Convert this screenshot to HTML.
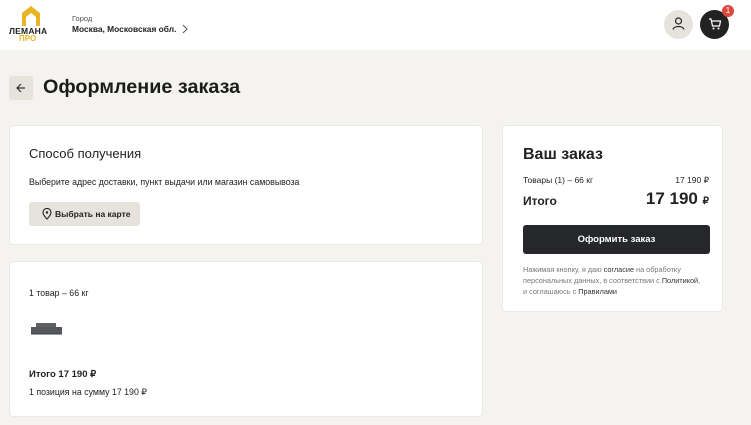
<!DOCTYPE html>
<html><head><meta charset="utf-8"><style>
*{box-sizing:border-box;margin:0;padding:0}
body{width:751px;height:425px;overflow:hidden;background:#f4f3f0;font-family:"Liberation Sans",sans-serif;color:#222;position:relative}
.hdr{position:absolute;left:0;top:0;width:751px;height:50px;background:#fff}
.card{position:absolute;background:#fff;border:1px solid #ebe9e4;border-radius:4px}
.a{position:absolute;white-space:nowrap}
</style></head><body>
<div class="hdr">
 <svg class="a" style="left:22px;top:6px" width="18" height="20" viewBox="0 0 18 20"><path d="M9 0L18 7V20H0V7Z" fill="#e8b624"/><path d="M9 7L14 11V20H4V11Z" fill="#fff"/></svg>
 <div class="a" style="left:9px;top:26px;font-size:8.5px;font-weight:bold;letter-spacing:.2px">ЛЕМАНА</div>
 <div class="a" style="left:19px;top:34px;font-size:8px;font-weight:bold;color:#e8b624">ПРО</div>
 <div class="a" style="left:72px;top:14px;font-size:7.5px;color:#555">Город</div>
 <div class="a" style="left:72px;top:24px;font-size:8.4px;font-weight:bold">Москва, Московская обл.</div>
 <svg class="a" style="left:182px;top:24px" width="6" height="10"><path d="M1 1L5 5L1 9" stroke="#555" fill="none"/></svg>
 <div class="a" style="left:664px;top:10px;width:29px;height:29px;border-radius:50%;background:#e6e3dc"></div>
 <svg class="a" style="left:672px;top:17px" width="13" height="13" viewBox="0 0 13 13"><circle cx="6.5" cy="4" r="3" stroke="#222" fill="none" stroke-width="1.2"/><path d="M1 12.5C2 8.5 11 8.5 12 12.5" stroke="#222" fill="none" stroke-width="1.2"/></svg>
 <div class="a" style="left:700px;top:10px;width:29px;height:29px;border-radius:50%;background:#222"></div>
 <svg class="a" style="left:708px;top:18px" width="14" height="12" viewBox="0 0 14 12"><path d="M1 1H3L4.5 8H11.5L12.5 3H4" stroke="#fff" fill="none" stroke-width="1.2"/><circle cx="5.5" cy="10.5" r="1" fill="#fff"/><circle cx="10.5" cy="10.5" r="1" fill="#fff"/></svg>
 <div class="a" style="left:722px;top:5px;width:12px;height:12px;border-radius:50%;background:#d9483b;color:#fff;font-size:8px;text-align:center;line-height:12px">1</div>
</div>
<div class="a" style="left:9px;top:76px;width:24px;height:24px;border-radius:3px;background:#e6e3dc"></div>
<svg class="a" style="left:16px;top:83px" width="10" height="10"><path d="M9 5H1M5 1L1 5L5 9" stroke="#333" fill="none" stroke-width="1.2"/></svg>
<div class="a" style="left:43px;top:76px;font-size:19.8px;font-weight:bold;color:#1c1c1c">Оформление заказа</div>

<div class="card" style="left:9px;top:125px;width:474px;height:120px">
 <div class="a" style="left:19px;top:20px;font-size:13px">Способ получения</div>
 <div class="a" style="left:19px;top:51px;font-size:8.8px">Выберите адрес доставки, пункт выдачи или магазин самовывоза</div>
 <div class="a" style="left:19px;top:76px;width:111px;height:24px;border-radius:3px;background:#e6e3dc"></div>
 <svg class="a" style="left:32px;top:82px" width="10" height="12" viewBox="0 0 10 12"><path d="M5 11C2 8 1 6 1 4.5A4 4 0 0 1 9 4.5C9 6 8 8 5 11Z" stroke="#222" fill="none" stroke-width="1.1"/><circle cx="5" cy="4.5" r="1.2" fill="#222"/></svg>
 <div class="a" style="left:45px;top:83px;font-size:8.5px;font-weight:bold">Выбрать на карте</div>
</div>

<div class="card" style="left:9px;top:261px;width:474px;height:156px">
 <div class="a" style="left:19px;top:26px;font-size:8.8px">1 товар – 66 кг</div>
 <svg class="a" style="left:20px;top:59px" width="33" height="15" viewBox="0 0 33 15"><path d="M6 6V2H26V6Z" fill="#5e6063"/><path d="M1 6H32V13H1Z" fill="#55575a"/><path d="M1 13H32" stroke="#3e4043"/></svg>
 <div class="a" style="left:19px;top:107px;font-size:9.5px;font-weight:bold">Итого 17 190 ₽</div>
 <div class="a" style="left:19px;top:125px;font-size:8.8px">1 позиция на сумму 17 190 ₽</div>
</div>

<div class="card" style="left:502px;top:125px;width:221px;height:187px">
 <div class="a" style="left:20px;top:20px;font-size:16px;font-weight:bold">Ваш заказ</div>
 <div class="a" style="left:20px;top:49px;font-size:8.5px">Товары (1) – 66 кг</div>
 <div class="a" style="right:13px;top:49px;font-size:8.5px">17 190 ₽</div>
 <div class="a" style="left:20px;top:68px;font-size:12px;font-weight:bold">Итого</div>
 <div class="a" style="right:13px;top:63px;font-size:17px;font-weight:bold">17 190 <span style="font-size:10px">₽</span></div>
 <div class="a" style="left:20px;top:99px;width:187px;height:29px;border-radius:3px;background:#25272a;color:#fff;font-size:9.5px;font-weight:bold;text-align:center;line-height:29px">Оформить заказ</div>
 <div class="a" style="left:20px;top:138px;font-size:7.3px;line-height:11px;color:#777">Нажимая кнопку, я даю <span style="color:#333">согласие</span> на обработку<br>персональных данных, в соответствии с <span style="color:#333">Политикой</span>,<br>и соглашаюсь с <span style="color:#333">Правилами</span></div>
</div>
</body></html>
